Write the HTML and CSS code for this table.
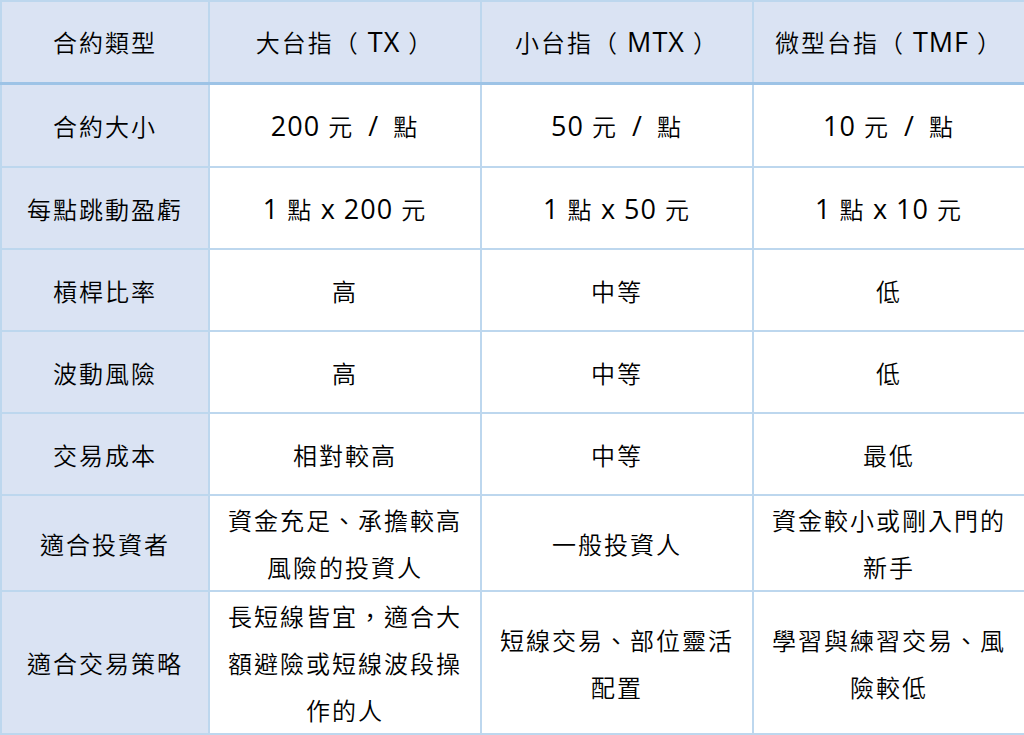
FILE: index.html
```html
<!DOCTYPE html>
<html lang="zh-Hant">
<head>
<meta charset="utf-8">
<title>台指期合約比較</title>
<link rel="stylesheet" href="styles.css">
</head>
<body>
<table class="compare">
  <colgroup>
    <col class="c-label">
    <col class="c-val">
    <col class="c-val">
    <col class="c-val">
  </colgroup>
  <thead>
    <tr>
      <th>合約類型</th>
      <th>大台指（<span class="lat"> TX </span>）</th>
      <th>小台指（<span class="lat"> MTX </span>）</th>
      <th>微型台指（<span class="lat"> TMF </span>）</th>
    </tr>
  </thead>
  <tbody>
    <tr class="first">
      <th>合約大小</th>
      <td><span class="lat">200 </span>元<span class="lat slash"> / </span>點</td>
      <td><span class="lat">50 </span>元<span class="lat slash"> / </span>點</td>
      <td><span class="lat">10 </span>元<span class="lat slash"> / </span>點</td>
    </tr>
    <tr>
      <th>每點跳動盈虧</th>
      <td><span class="lat">1 </span>點 <span class="lat">x 200 </span>元</td>
      <td><span class="lat">1 </span>點 <span class="lat">x 50 </span>元</td>
      <td><span class="lat">1 </span>點 <span class="lat">x 10 </span>元</td>
    </tr>
    <tr>
      <th>槓桿比率</th>
      <td>高</td>
      <td>中等</td>
      <td>低</td>
    </tr>
    <tr>
      <th>波動風險</th>
      <td>高</td>
      <td>中等</td>
      <td>低</td>
    </tr>
    <tr>
      <th>交易成本</th>
      <td>相對較高</td>
      <td>中等</td>
      <td>最低</td>
    </tr>
    <tr class="auto">
      <th>適合投資者</th>
      <td>資金充足、承擔較高風險的投資人</td>
      <td>一般投資人</td>
      <td>資金較小或剛入門的新手</td>
    </tr>
    <tr class="auto">
      <th>適合交易策略</th>
      <td>長短線皆宜，適合大額避險或短線波段操作的人</td>
      <td>短線交易、部位靈活配置</td>
      <td>學習與練習交易、風險較低</td>
    </tr>
  </tbody>
</table>
</body>
</html>
```

FILE: styles.css
```css
html, body {
  margin: 0;
  padding: 0;
  background: #ffffff;
}

.compare {
  width: 1024px;
  border-collapse: collapse;
  table-layout: fixed;
  font-family: "Noto Sans CJK TC", "Open Sans", sans-serif;
  font-size: 24px;
  font-weight: 350;
  color: #000000;
}

.c-label {
  width: 208px;
}

.c-val {
  width: 272px;
}

.compare th,
.compare td {
  border: 2px solid #bdd7ee;
  padding: 0 16px;
  text-align: center;
  vertical-align: middle;
  font-weight: 350;
  line-height: 47px;
  letter-spacing: 2px;
}

.lat {
  font-family: "Open Sans", "Noto Sans CJK TC", sans-serif;
  font-size: 27px;
  font-weight: 400;
  letter-spacing: 1px;
  line-height: 1;
}

.slash {
  word-spacing: 6px;
}

.compare thead th {
  background: #dae3f3;
  border-bottom: 3px solid #9dc3e6;
}

.compare tbody th {
  background: #dae3f3;
}

.compare tr {
  height: 82px;
}

.compare tr.first {
  height: 84px;
}

.compare tr.auto {
  height: auto;
}
```
